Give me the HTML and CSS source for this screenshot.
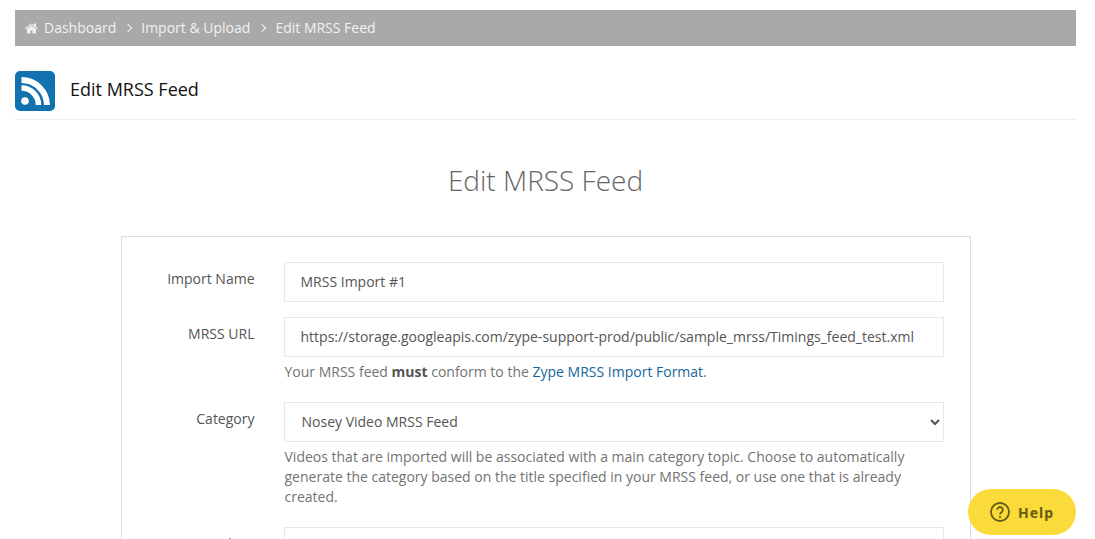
FILE: index.html
```html
<!DOCTYPE html>
<html lang="en">
<head>
  <meta charset="UTF-8">
  <title>Edit MRSS Feed</title>
  <link rel="stylesheet" href="styles.css">
</head>
<body>
  <div class="page">
    <nav class="breadcrumb">
      <svg class="home-icon" viewBox="0 0 1664 1408" aria-hidden="true">
        <path fill="currentColor" d="M1408 800v480q0 26-19 45t-45 19H960V960H704v384H320q-26 0-45-19t-19-45V800q0-1 .5-3t.5-3l575-474 575 474q1 2 1 6zm223-69-62 74q-8 9-21 11h-3q-13 0-21-7L832 200 140 809q-12 8-24 7-13-2-21-11l-62-74q-8-10-7-23.500T37 686L756 87q32-26 76-26t76 26l244 204V96q0-14 9-23t23-9h192q14 0 23 9t9 23v408l219 182q10 8 11 21.500t-7 23.500z"/>
      </svg>
      <a href="#">Dashboard</a>
      <span class="sep"></span>
      <a href="#">Import &amp; Upload</a>
      <span class="sep"></span>
      <a href="#">Edit MRSS Feed</a>
    </nav>

    <header class="page-header">
      <svg class="rss-icon" viewBox="0 0 40 40" aria-hidden="true">
        <rect width="40" height="40" rx="5" fill="#1272b0"/>
        <circle cx="10" cy="30" r="3.800" fill="#fff"/>
        <path fill="none" stroke="#fff" stroke-width="5.500" d="M6.500 17a17 17 0 0 1 17 17"/>
        <path fill="none" stroke="#fff" stroke-width="6" d="M6.500 9a25.500 25.500 0 0 1 25.500 25"/>
      </svg>
      <span class="page-title">Edit MRSS Feed</span>
    </header>

    <h1 class="form-title">Edit MRSS Feed</h1>

    <form class="form-box">
      <div class="form-row">
        <label class="form-label">Import Name</label>
        <div class="form-field">
          <input class="form-control" type="text" value="MRSS Import #1">
        </div>
      </div>
      <div class="form-row">
        <label class="form-label">MRSS URL</label>
        <div class="form-field">
          <input class="form-control" type="text" value="https://storage.googleapis.com/zype-support-prod/public/sample_mrss/Timings_feed_test.xml">
          <p class="help-text">Your MRSS feed <strong>must</strong> conform to the <a href="#">Zype MRSS Import Format</a>.</p>
        </div>
      </div>
      <div class="form-row">
        <label class="form-label">Category</label>
        <div class="form-field">
          <select class="form-control">
            <option>Nosey Video MRSS Feed</option>
          </select>
          <p class="help-text">Videos that are imported will be associated with a main category topic. Choose to automatically generate the category based on the title specified in your MRSS feed, or use one that is already created.</p>
        </div>
      </div>
      <div class="form-row">
        <label class="form-label">Videos</label>
        <div class="form-field">
          <input class="form-control" type="text">
        </div>
      </div>
    </form>
  </div>

  <button class="help-button" type="button">
    <svg class="help-icon" viewBox="0 0 20 20" aria-hidden="true">
      <circle cx="10" cy="10" r="9" fill="none" stroke="currentColor" stroke-width="1.800"/>
      <path fill="none" stroke="currentColor" stroke-width="1.800" d="M7.200 7.800a2.800 2.800 0 1 1 4.300 2.400c-1 .6-1.500 1.100-1.500 2.200"/>
      <circle cx="10" cy="15" r="1.100" fill="currentColor"/>
    </svg>
    Help
  </button>
</body>
</html>
```
FILE: styles.css
```css
html, body {
  height: 100%;
  overflow: hidden;
}
body {
  margin: 0;
  background: #fff;
  color: #555;
  font-family: "Open Sans", "Noto Sans", sans-serif;
  font-size: 14px;
  line-height: 20px;
}
.page {
  padding: 10px 19px 0 15px;
}
.breadcrumb {
  display: flex;
  align-items: center;
  height: 36px;
  padding-left: 10px;
  background: #a9a9a9;
  color: #f1f1f1;
}
.breadcrumb a {
  color: #f1f1f1;
  text-decoration: none;
}
.home-icon {
  width: 13px;
  height: 11px;
  margin-right: 6px;
}
.sep {
  display: flex;
  justify-content: center;
  width: 25px;
}
.sep::before {
  content: "";
  width: 5px;
  height: 5px;
  border-top: 1px solid #f1f1f1;
  border-right: 1px solid #f1f1f1;
  transform: translateX(-1px) rotate(45deg);
}
.page-header {
  display: flex;
  align-items: center;
  box-sizing: border-box;
  height: 74px;
  padding: 25px 0 8px;
  border-bottom: 1px solid #eee;
}
.rss-icon {
  width: 40px;
  height: 40px;
  margin-right: 15px;
}
.page-title {
  margin-bottom: 4px;
  color: #111;
  font-size: 18px;
}
.form-title {
  margin: 40px 0 36px;
  color: #666;
  font-size: 28px;
  line-height: 40px;
  font-weight: 300;
  text-align: center;
}
.form-box {
  width: 850px;
  margin: 0 auto;
  box-sizing: border-box;
  padding: 25px 26px 0 0;
  border: 1px solid #ddd;
}
.form-row {
  display: flex;
  margin-bottom: 15px;
}
.form-label {
  width: 133px;
  padding-top: 7px;
  text-align: right;
  flex-shrink: 0;
}
.form-field {
  flex: 1;
  margin-left: 29px;
  min-width: 0;
}
.form-control {
  display: block;
  width: 100%;
  height: 40px;
  box-sizing: border-box;
  padding: 0 16px 2px;
  border: 1px solid #e8e8e8;
  border-radius: 0;
  background: #fff;
  color: #555;
  font-family: inherit;
  font-size: 14px;
}
select.form-control {
  padding: 0 13px 2px;
}
.help-text {
  margin: 5px 0;
  padding-left: 1px;
  color: #737373;
}
.help-text a {
  color: #15679c;
  text-decoration: none;
}
.help-text strong {
  color: #555;
}
.help-button {
  position: fixed;
  left: 968px;
  top: 489px;
  display: flex;
  align-items: center;
  width: 108px;
  height: 46px;
  padding: 0 0 0 22px;
  border: 0;
  border-radius: 23px;
  background: #fadb3a;
  color: #665a14;
  font-family: "Noto Sans", sans-serif;
  font-size: 14px;
  font-weight: 700;
  letter-spacing: 1px;
}
.help-icon {
  width: 20px;
  height: 20px;
  margin-right: 8px;
}
```
